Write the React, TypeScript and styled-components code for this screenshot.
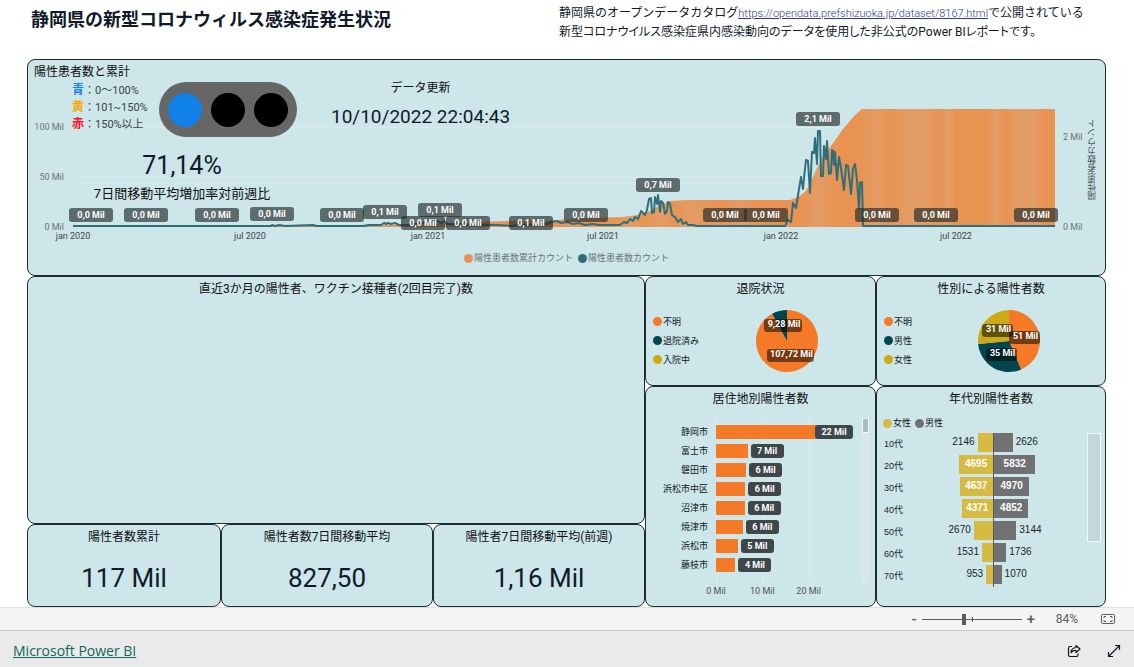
import React from "react";
import styled, { createGlobalStyle } from "styled-components";

const jp = `"Noto Sans CJK JP", sans-serif`;

const GlobalStyle = createGlobalStyle`
  *, *::before, *::after { box-sizing: border-box; }
  body {
    margin: 0;
    background: #fff;
    color: #0f1a2b;
    font-family: Roboto, ${jp};
    font-size: 12px;
  }
  h1, h2, p, ul { margin: 0; padding: 0; font-weight: 400; }
  ul { list-style: none; }
`;

/* ---------- page frame ---------- */

const Page = styled.div`
  min-height: 100vh;
  display: flex;
  flex-direction: column;
`;

const Header = styled.header`
  display: grid;
  grid-template-columns: 528px 1fr;
  padding: 4px 28px 0 31px;
  height: 59px;
`;

const PageTitle = styled.h1`
  font-size: 18px;
  line-height: 28px;
  font-weight: 700;
  font-family: ${jp};
`;

const Intro = styled.div`
  font-size: 12px;
  line-height: 18px;
  white-space: nowrap;
`;

const IntroLine = styled.p<{ $proportional?: boolean }>`
  font-feature-settings: ${(p) => (p.$proportional ? `"palt"` : "normal")};
`;

const DataLink = styled.a`
  font-size: 11px;
  font-weight: 300;
  color: #2c3b94;
`;

const Report = styled.main`
  flex: 1;
  display: grid;
  grid-template-columns: 618fr 231fr 230fr;
  grid-template-rows: 217px 1fr;
  padding: 0 28px 0 27px;
`;

const Column = styled.div<{ $rows: string }>`
  display: grid;
  grid-template-rows: ${(p) => p.$rows};
`;

const Panel = styled.section`
  position: relative;
  display: flex;
  flex-direction: column;
  min-width: 0;
  border: 1px solid #1f2c2e;
  border-radius: 8px;
  background: #cce6e9;
`;

const WidePanel = styled(Panel)`
  grid-column: 1 / -1;
`;

const PanelTitle = styled.h2<{ $left?: boolean }>`
  padding: ${(p) => (p.$left ? "0 6px" : "0")};
  text-align: ${(p) => (p.$left ? "left" : "center")};
  font-size: 12px;
  line-height: 24px;
  color: #101010;
`;

/* ---------- combined trend chart ---------- */

const Trend = styled.div`
  display: grid;
  grid-template-columns: 45px 1fr 50px;
  grid-template-rows: 128px 16px;
  margin-top: 16px;
`;

const Plot = styled.div`
  position: relative;
  height: 128px;

  > svg {
    display: block;
    width: 100%;
    height: 128px;
  }
`;

const Axis = styled.div`
  position: relative;
  font-size: 9px;
  line-height: 12px;
  color: #6a7577;
`;

const LeftTick = styled.span`
  position: absolute;
  right: 9px;
`;

const RightTick = styled.span`
  position: absolute;
  left: 8px;
`;

const AxisTitle = styled.span`
  position: absolute;
  left: 31px;
  top: 19px;
  writing-mode: vertical-rl;
  transform: rotate(180deg);
  color: #4c5557;
`;

const MonthAxis = styled(Axis)`
  grid-column: 2;
`;

const Month = styled.span`
  position: absolute;
  top: 2px;
  transform: translateX(-50%);
  color: #3c4648;
  white-space: nowrap;
`;

const PointLabel = styled.span`
  position: absolute;
  width: 44px;
  height: 14px;
  margin-left: -22px;
  border-radius: 3px;
  background: rgba(33, 42, 42, 0.65);
  color: #fff;
  font-size: 9px;
  font-weight: 700;
  line-height: 14px;
  text-align: center;
`;

const Legend = styled.ul<{ $column?: boolean; $muted?: boolean }>`
  display: flex;
  flex-direction: ${(p) => (p.$column ? "column" : "row")};
  gap: 7px;
  font-size: 9px;
  line-height: 12px;
  color: ${(p) => (p.$muted ? "#6a7577" : "#101818")};
`;

const LegendItem = styled.li<{ $color: string }>`
  display: flex;
  align-items: center;
  gap: 1px;
  white-space: nowrap;

  &::before {
    content: "";
    width: 9px;
    height: 9px;
    border-radius: 50%;
    background: ${(p) => p.$color};
  }
`;

const TrendLegend = styled(Legend)`
  gap: 5px;
  justify-content: center;
  margin-top: 8px;
`;

const RateCard = styled.div`
  position: absolute;
  left: 44px;
  top: 22px;
  width: 225px;
  display: flex;
  flex-direction: column;
`;

const RateHead = styled.div`
  display: flex;
  justify-content: space-between;
`;

const Thresholds = styled.ul`
  font-size: 11px;
  line-height: 16px;
  color: #3a4547;
`;

const Level = styled.b<{ $color: string }>`
  font-size: 12px;
  font-weight: 700;
  color: ${(p) => p.$color};
`;

const Signal = styled.div`
  display: flex;
  align-items: center;
  justify-content: space-between;
  width: 138px;
  height: 55px;
  padding: 0 9px;
  border-radius: 28px;
  background: #666;
`;

const Lamp = styled.span<{ $color: string }>`
  width: 34px;
  height: 34px;
  border-radius: 50%;
  background: ${(p) => p.$color};
`;

const RateValue = styled.p`
  width: 220px;
  margin-top: 13px;
  text-align: center;
  font-size: 25px;
  line-height: 32px;
`;

const RateCaption = styled.p`
  width: 220px;
  text-align: center;
  font-size: 13px;
  line-height: 24px;
  color: #101010;
`;

const DateCard = styled.div`
  position: absolute;
  left: 303px;
  top: 18px;
  text-align: center;
  line-height: 20px;
  color: #101010;
`;

const DateValue = styled.p`
  margin-top: 9px;
  font-size: 19px;
  line-height: 20px;
  color: #0f1a2b;
`;

/* Coordinates of the plot area: 982 wide (Jan 2020 to Oct 2022), 128 high, zero at 127. */
const cumulative = [
  [0, 127], [200, 126], [317, 125], [374, 123], [434, 121], [470, 121], [484, 120], [517, 118],
  [550, 117], [564, 115], [570, 113], [577, 111], [584, 107], [590, 104], [597, 101], [614, 100],
  [717, 100], [725, 97], [732, 92], [737, 84], [743, 70], [749, 58], [755, 50], [763, 39],
  [770, 29], [777, 21], [783, 14], [789, 9], [982, 9],
];

const daily = [
  [0, 126], [198, 126], [199, 125], [202, 126], [206, 125], [212, 126], [240, 125], [244, 126],
  [290, 126], [296, 125], [308, 125], [311, 123], [313, 124], [315, 123], [318, 124], [322, 123],
  [326, 125], [336, 125], [341, 124], [349, 123], [357, 122], [364, 121], [368, 123], [371, 121],
  [374, 124], [384, 124], [396, 125], [424, 125], [440, 126], [444, 125], [464, 125], [472, 124],
  [479, 122], [484, 121], [488, 123], [494, 122], [500, 124], [506, 123], [512, 125], [520, 124],
  [526, 125], [547, 125], [551, 122], [554, 123], [557, 119], [560, 121], [562, 117], [565, 119],
  [568, 111], [572, 115], [574, 110], [576, 99], [578, 98], [579, 113], [581, 112], [582, 97],
  [584, 104], [585, 95], [587, 112], [588, 101], [590, 103], [592, 114], [594, 111], [595, 102],
  [597, 104], [599, 115], [602, 117], [605, 122], [608, 119], [610, 124], [613, 122], [615, 125],
  [620, 125], [624, 126], [712, 126], [715, 120], [718, 122], [720, 103], [723, 108], [726, 89],
  [728, 77], [730, 89], [731, 78], [733, 60], [735, 61], [737, 93], [739, 52], [741, 53],
  [742, 38], [744, 64], [745, 31], [747, 31], [748, 76], [750, 76], [751, 46], [753, 59],
  [754, 41], [756, 74], [758, 73], [759, 50], [760, 51], [761, 65], [762, 52], [764, 80],
  [766, 57], [768, 68], [771, 90], [773, 65], [775, 66], [778, 94], [780, 69], [782, 64],
  [784, 80], [786, 109], [787, 83], [789, 82], [790, 126], [982, 126],
];

const stripes = [
  [0, 0], [55, 0], [57, 1], [58, 0], [60, 1], [61, 0], [63, 1], [66, 0], [68, 1], [70, 0],
  [74, 0], [76, 1], [78, 0], [80, 0], [82, 1], [83, 0], [85, 1], [87, 1], [88, 0], [89, 1],
  [90, 0], [93, 0], [94, 1], [95, 0], [96, 1], [98, 1], [99, 0], [100, 0],
];

const pointLabels: [number, number, string][] = [
  [18, 108, "0,0 Mil"], [73, 108, "0,0 Mil"], [144, 108, "0,0 Mil"], [199, 107, "0,0 Mil"],
  [269, 108, "0,0 Mil"], [312, 105, "0,1 Mil"], [367, 103, "0,1 Mil"], [350, 116, "0,0 Mil"],
  [395, 116, "0,0 Mil"], [458, 116, "0,1 Mil"], [513, 108, "0,0 Mil"], [585, 78, "0,7 Mil"],
  [652, 108, "0,0 Mil"], [693, 108, "0,0 Mil"], [745, 12, "2,1 Mil"], [804, 108, "0,0 Mil"],
  [863, 108, "0,0 Mil"], [963, 108, "0,0 Mil"],
];

const months: [number, string][] = [
  [0, "jan 2020"], [177, "jul 2020"], [355, "jan 2021"],
  [530, "jul 2021"], [708, "jan 2022"], [883, "jul 2022"],
];

const pct = (x: number) => `${(x / 982) * 100}%`;
const toPoints = (list: number[][]) => list.map((p) => p.join(",")).join(" ");

function TrendPanel() {
  return (
    <WidePanel>
      <PanelTitle $left>陽性患者数と累計</PanelTitle>
      <Trend>
        <Axis>
          <LeftTick style={{ top: 21 }}>100 Mil</LeftTick>
          <LeftTick style={{ top: 71 }}>50 Mil</LeftTick>
          <LeftTick style={{ top: 121 }}>0 Mil</LeftTick>
        </Axis>
        <Plot>
          <svg viewBox="0 0 982 128" preserveAspectRatio="none" aria-hidden="true">
            <defs>
              <linearGradient id="bands">
                {stripes.map(([at, light]) => (
                  <stop key={at} offset={`${at}%`} stopColor={light ? "#e49c65" : "#e89352"} />
                ))}
              </linearGradient>
            </defs>
            <path d="M0 27.5H982M0 77.5H982" stroke="#dbe9eb" />
            <polygon points={`${toPoints(cumulative)} 982,127 0,127`} fill="url(#bands)" />
            <polyline
              points={toPoints(daily)}
              fill="none"
              stroke="#2f6f7a"
              strokeWidth="2"
              strokeLinejoin="round"
              vectorEffect="non-scaling-stroke"
            />
          </svg>
          {pointLabels.map(([x, y, text]) => (
            <PointLabel key={x} style={{ left: pct(x), top: y }}>{text}</PointLabel>
          ))}
        </Plot>
        <Axis>
          <RightTick style={{ top: 31 }}>2 Mil</RightTick>
          <RightTick style={{ top: 121 }}>0 Mil</RightTick>
          <AxisTitle>陽性患者数カウント</AxisTitle>
        </Axis>
        <MonthAxis>
          {months.map(([x, text]) => (
            <Month key={x} style={{ left: pct(x) }}>{text}</Month>
          ))}
        </MonthAxis>
      </Trend>
      <TrendLegend $muted>
        <LegendItem $color="#e89352">陽性患者数累計カウント</LegendItem>
        <LegendItem $color="#2f6f7a">陽性患者数カウント</LegendItem>
      </TrendLegend>
      <RateCard>
        <RateHead>
          <Thresholds>
            <li><Level $color="#1a82e2">青</Level>：0～100%</li>
            <li><Level $color="#fba905">黄</Level>：101~150%</li>
            <li><Level $color="#f8101c">赤</Level>：150%以上</li>
          </Thresholds>
          <Signal>
            <Lamp $color="#1181ea" />
            <Lamp $color="#000" />
            <Lamp $color="#000" />
          </Signal>
        </RateHead>
        <RateValue>71,14%</RateValue>
        <RateCaption>7日間移動平均増加率対前週比</RateCaption>
      </RateCard>
      <DateCard>
        <p>データ更新</p>
        <DateValue>10/10/2022 22:04:43</DateValue>
      </DateCard>
    </WidePanel>
  );
}

/* ---------- number cards ---------- */

const CardRow = styled.div`
  display: grid;
  grid-template-columns: 194fr 212fr 212fr;
`;

const CardValue = styled.p`
  flex: 1;
  display: flex;
  align-items: center;
  justify-content: center;
  font-size: 26px;
  line-height: 32px;
`;

function NumberCard({ title, value }: { title: string; value: string }) {
  return (
    <Panel>
      <PanelTitle>{title}</PanelTitle>
      <CardValue>{value}</CardValue>
    </Panel>
  );
}

/* ---------- pie charts ---------- */

const PieBody = styled.div`
  flex: 1;
  display: flex;
  align-items: center;
  padding: 0 0 5px 7px;
`;

const PieArea = styled.div`
  flex: 1;
  display: flex;
  justify-content: center;
`;

const PieText = styled.text`
  font: 700 9px Roboto, sans-serif;
  fill: #fff;
  text-anchor: middle;
`;

type Slice = { name: string; value: number; color: string };
type PieLabel = { x: number; y: number; w: number; text: string };

function sector(from: number, to: number) {
  const at = (t: number) => {
    const a = t * 2 * Math.PI;
    return `${32 + 31 * Math.sin(a)} ${32 - 31 * Math.cos(a)}`;
  };
  return `M32 32L${at(from)}A31 31 0 ${to - from > 0.5 ? 1 : 0} 1 ${at(to)}Z`;
}

function PiePanel({ title, slices, labels }: { title: string; slices: Slice[]; labels: PieLabel[] }) {
  const total = slices.reduce((sum, s) => sum + s.value, 0);
  /* Slices are listed clockwise, so the last one with a value ends at twelve o'clock. */
  let start = 0;
  return (
    <Panel>
      <PanelTitle>{title}</PanelTitle>
      <PieBody>
        <Legend $column>
          {slices.map((s) => <LegendItem key={s.name} $color={s.color}>{s.name}</LegendItem>)}
        </Legend>
        <PieArea>
          <svg width="64" height="64" viewBox="0 0 64 64" role="img" aria-label={title}>
            {slices.map((s) => {
              const from = start;
              start += s.value / total;
              return s.value > 0 ? <path key={s.name} d={sector(from, start)} fill={s.color} /> : null;
            })}
            {labels.map((l) => (
              <g key={l.text}>
                <rect x={l.x} y={l.y} width={l.w} height="13" rx="3" fill="#000" fillOpacity="0.52" />
                <PieText x={l.x + l.w / 2 + 1} y={l.y + 8}>{l.text}</PieText>
              </g>
            ))}
          </svg>
        </PieArea>
      </PieBody>
    </Panel>
  );
}

/* ---------- bars by city ---------- */

const ChartRow = styled.div`
  flex: 1;
  display: flex;
  padding: 7px 6px 0 0;
`;

const CityNames = styled.ul`
  width: 70px;
  padding: 5px 8px 0 0;
  text-align: right;
  font-size: 9px;
  line-height: 19px;
  color: #101818;
`;

const CityPlot = styled.div`
  flex: 1;
  margin-right: 7px;
`;

const Bars = styled.ul`
  height: 165px;
  padding-top: 4px;
  background: repeating-linear-gradient(90deg, #dcebed 0 1px, transparent 1px 33.333%);
`;

const CityRow = styled.li`
  display: flex;
  align-items: center;
  height: 19px;
`;

const CityBar = styled.span`
  height: 14px;
  background: #f47a27;
`;

const CityValue = styled.span<{ $overlap?: boolean }>`
  flex: none;
  width: ${(p) => (p.$overlap ? 38 : 33)}px;
  margin-left: ${(p) => (p.$overlap ? -2 : 3)}px;
  height: 14px;
  border-radius: 3px;
  background: #3f4748;
  color: #fff;
  font-size: 9px;
  font-weight: 700;
  line-height: 14px;
  text-align: center;
`;

const CityScale = styled.div`
  display: grid;
  grid-template-columns: repeat(3, 1fr);
  font-size: 9px;
  line-height: 16px;
  color: #4c5557;

  span { justify-self: start; transform: translateX(-50%); }
`;

const CityScroll = styled.div`
  width: 7px;
  height: 165px;
  background: #d9e7e8;

  &::before {
    content: "";
    display: block;
    height: 15px;
    border: 1px solid #eef6f6;
    background: #adbcbe;
  }
`;

const cities: [string, number, string][] = [
  ["静岡市", 21.8, "22 Mil"], ["富士市", 6.8, "7 Mil"], ["磐田市", 6.5, "6 Mil"],
  ["浜松市中区", 6.3, "6 Mil"], ["沼津市", 6.2, "6 Mil"], ["焼津市", 5.8, "6 Mil"],
  ["浜松市", 4.7, "5 Mil"], ["藤枝市", 4.2, "4 Mil"],
];

function CityPanel() {
  return (
    <Panel>
      <PanelTitle>居住地別陽性者数</PanelTitle>
      <ChartRow>
        <CityNames>
          {cities.map(([name]) => <li key={name}>{name}</li>)}
        </CityNames>
        <CityPlot>
          <Bars>
            {cities.map(([name, value, text]) => (
              <CityRow key={name}>
                <CityBar style={{ width: `${(value / 30) * 100}%` }} />
                <CityValue $overlap={value > 20}>{text}</CityValue>
              </CityRow>
            ))}
          </Bars>
          <CityScale>
            <span>0 Mil</span>
            <span>10 Mil</span>
            <span>20 Mil</span>
          </CityScale>
        </CityPlot>
        <CityScroll />
      </ChartRow>
    </Panel>
  );
}

/* ---------- age pyramid ---------- */

const AgeLegend = styled(Legend)`
  gap: 4px;
  padding: 6px 6px 0;
`;

const AgeBody = styled.div`
  display: flex;
  justify-content: space-between;
  padding: 4px 4px 0 7px;
`;

const Ages = styled.ul`
  flex: 1;
  margin-right: 22px;
`;

const AgeRow = styled.li`
  display: grid;
  grid-template-columns: 37px 1fr 1fr;
  height: 22px;
  font-family: "Liberation Sans", ${jp};
  font-size: 10px;
  line-height: 18px;
  color: #1c2526;
`;

const AgeName = styled.span`
  font-size: 9px;
  line-height: 22px;
`;

const Half = styled.div<{ $reverse?: boolean }>`
  display: flex;
  flex-direction: ${(p) => (p.$reverse ? "row-reverse" : "row")};
  gap: 3px;
  border-left: ${(p) => (p.$reverse ? "0" : "1px solid #565a5c")};
`;

const AgeBar = styled.span<{ $color: string }>`
  height: 19px;
  background: ${(p) => p.$color};
  color: #fff;
  font-weight: 700;
  text-align: center;
`;

const AgeScroll = styled.div`
  width: 14px;
  height: 109px;
  border: 1px solid #f2f9f9;
  background: #c1d9dc;
`;

const ages: [string, number, number][] = [
  ["10代", 2146, 2626], ["20代", 4695, 5832], ["30代", 4637, 4970], ["40代", 4371, 4852],
  ["50代", 2670, 3144], ["60代", 1531, 1736], ["70代", 953, 1070],
];

function AgeHalf({ value, color, reverse }: { value: number; color: string; reverse?: boolean }) {
  const inside = value > 4000;
  return (
    <Half $reverse={reverse}>
      <AgeBar $color={color} style={{ width: `${value / 100}%` }}>{inside ? value : null}</AgeBar>
      {inside ? null : <span>{value}</span>}
    </Half>
  );
}

function AgePanel() {
  return (
    <Panel>
      <PanelTitle>年代別陽性者数</PanelTitle>
      <AgeLegend>
        <LegendItem $color="#d6ba42">女性</LegendItem>
        <LegendItem $color="#707173">男性</LegendItem>
      </AgeLegend>
      <AgeBody>
        <Ages>
          {ages.map(([name, female, male]) => (
            <AgeRow key={name}>
              <AgeName>{name}</AgeName>
              <AgeHalf value={female} color="#d6ba42" reverse />
              <AgeHalf value={male} color="#707173" />
            </AgeRow>
          ))}
        </Ages>
        <AgeScroll />
      </AgeBody>
    </Panel>
  );
}

/* ---------- bottom bars ---------- */

const ZoomBar = styled.div`
  display: flex;
  align-items: center;
  justify-content: flex-end;
  height: 23px;
  padding: 0 15px 0 0;
  border-top: 1px solid #e0e0e0;
  background: #f4f4f4;
  color: #5c5c5c;
`;

const IconButton = styled.button`
  display: flex;
  align-items: center;
  justify-content: center;
  min-width: 14px;
  padding: 0;
  border: 0;
  background: none;
  color: inherit;
  font: 500 15px Roboto, sans-serif;
  cursor: pointer;
`;

const ZoomRange = styled.input`
  appearance: none;
  width: 100px;
  height: 12px;
  margin: 0 2px 0 1px;
  background:
    linear-gradient(#5c5c5c, #5c5c5c) 50px 50% / 1px 5px no-repeat,
    linear-gradient(#5c5c5c, #5c5c5c) 0 50% / 100% 1px no-repeat;

  &::-webkit-slider-thumb {
    appearance: none;
    width: 4px;
    height: 11px;
    background: #5c5c5c;
  }
`;

const ZoomText = styled.span`
  width: 40px;
  margin-right: 19px;
  text-align: right;
  font-size: 12px;
`;

const Footer = styled.footer`
  display: flex;
  align-items: center;
  height: 37px;
  padding: 3px 13px 0;
  border-top: 1px solid #c8c8c8;
  background: #eaeaea;
`;

const BrandLink = styled.a`
  margin-right: auto;
  font-family: "Open Sans", sans-serif;
  font-size: 14px;
  color: #0f665c;
`;

const FooterActions = styled.div`
  display: flex;
  gap: 26px;
  color: #1d1024;
`;

export default function App() {
  return (
    <Page>
      <GlobalStyle />
      <Header>
        <PageTitle>静岡県の新型コロナウィルス感染症発生状況</PageTitle>
        <Intro>
          <IntroLine>
            静岡県のオープンデータカタログ
            <DataLink href="https://opendata.prefshizuoka.jp/dataset/8167.html">
              https://opendata.prefshizuoka.jp/dataset/8167.html
            </DataLink>
            で公開されている
          </IntroLine>
          <IntroLine $proportional>
            新型コロナウイルス感染症県内感染動向のデータを使用した非公式のPower BIレポートです。
          </IntroLine>
        </Intro>
      </Header>
      <Report>
        <TrendPanel />
        <Column $rows="1fr 83px">
          <Panel>
            <PanelTitle>直近3か月の陽性者、ワクチン接種者(2回目完了)数</PanelTitle>
          </Panel>
          <CardRow>
            <NumberCard title="陽性者数累計" value="117 Mil" />
            <NumberCard title="陽性者数7日間移動平均" value="827,50" />
            <NumberCard title="陽性者7日間移動平均(前週)" value="1,16 Mil" />
          </CardRow>
        </Column>
        <Column $rows="110px 1fr">
          <PiePanel
            title="退院状況"
            slices={[
              { name: "不明", value: 107.72, color: "#f47a27" },
              { name: "退院済み", value: 9.28, color: "#04464f" },
              { name: "入院中", value: 0, color: "#cbab15" },
            ]}
            labels={[
              { x: 9, y: 10, w: 38, text: "9,28 Mil" },
              { x: 12, y: 40, w: 47, text: "107,72 Mil" },
            ]}
          />
          <CityPanel />
        </Column>
        <Column $rows="110px 1fr">
          <PiePanel
            title="性別による陽性者数"
            slices={[
              { name: "不明", value: 51, color: "#f47a27" },
              { name: "男性", value: 35, color: "#04464f" },
              { name: "女性", value: 31, color: "#cbab15" },
            ]}
            labels={[
              { x: 5, y: 15, w: 31, text: "31 Mil" },
              { x: 32, y: 22, w: 31, text: "51 Mil" },
              { x: 9, y: 39, w: 31, text: "35 Mil" },
            ]}
          />
          <AgePanel />
        </Column>
      </Report>
      <ZoomBar>
        <IconButton type="button" aria-label="縮小">-</IconButton>
        <ZoomRange type="range" min={0} max={200} defaultValue={84} aria-label="ズーム" />
        <IconButton type="button" aria-label="拡大">+</IconButton>
        <ZoomText>84%</ZoomText>
        <IconButton type="button" aria-label="ページに合わせる">
          <svg width="22" height="12" viewBox="0 0 22 12" fill="none" stroke="#5c5c5c">
            <rect x="4.5" y="1.5" width="13" height="9" rx="1" />
            <path d="M7 5V3.500H9M13 3.500H15V5M7 7V8.500H9M13 8.500H15V7" />
          </svg>
        </IconButton>
      </ZoomBar>
      <Footer>
        <BrandLink href="https://powerbi.microsoft.com">Microsoft Power BI</BrandLink>
        <FooterActions>
          <IconButton type="button" aria-label="共有">
            <svg width="14" height="14" viewBox="0 0 14 14" fill="none" stroke="currentColor" strokeWidth="1.2" strokeLinejoin="round">
              <path d="M5 2.500H3Q1.500 2.500 1.500 4V11Q1.500 12.500 3 12.500H9.500Q11 12.500 11 11V9.500" />
              <path d="M9 1.500L13 5L9 8.500V6.500Q6 6.200 4 8.500Q4.300 4 9 3.500Z" />
            </svg>
          </IconButton>
          <IconButton type="button" aria-label="全画面表示">
            <svg width="14" height="14" viewBox="0 0 14 14" fill="none" stroke="currentColor" strokeWidth="1.2">
              <path d="M1.500 12.500L12.500 1.500M8 1.500H12.500V6M1.500 8V12.500H6" />
            </svg>
          </IconButton>
        </FooterActions>
      </Footer>
    </Page>
  );
}
